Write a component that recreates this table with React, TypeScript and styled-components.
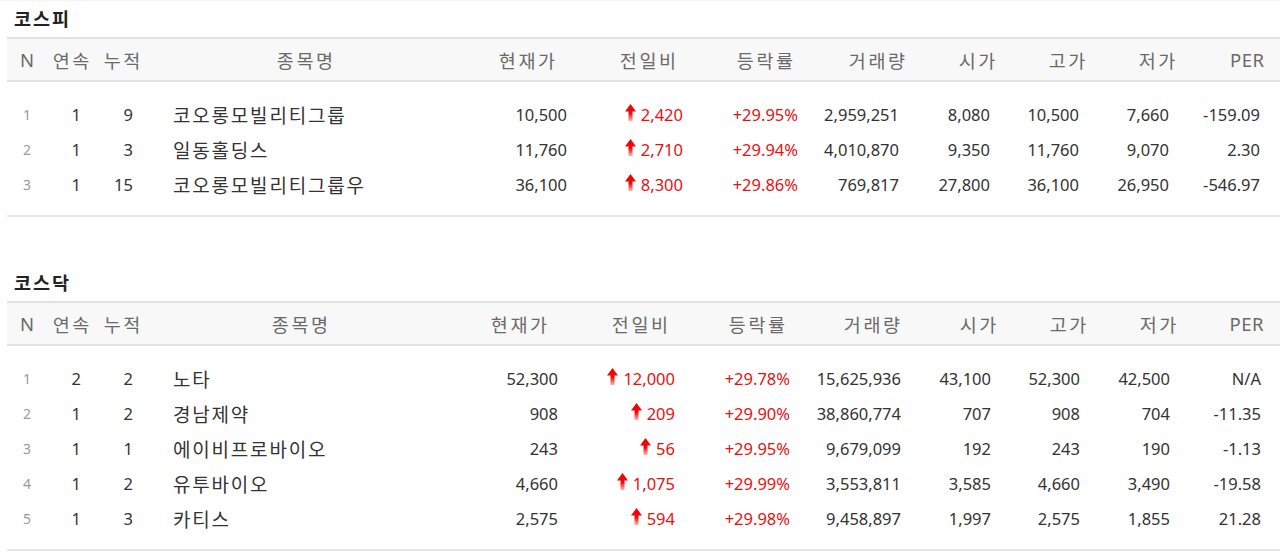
import React from "react";
import styled, { createGlobalStyle } from "styled-components";

const Global = createGlobalStyle`
  html, body { margin: 0; padding: 0; background: #fff; }
  body {
    font-family: "Noto Sans", "Noto Sans CJK KR", sans-serif;
    color: #333;
    overflow: hidden;
  }
`;

type Col = { w: number; align: "center" | "left" | "right"; pad: number; hpl?: number };

type Stock = {
  streak: string;
  total: string;
  name: string;
  price: string;
  diff: string;
  rate: string;
  volume: string;
  open: string;
  high: string;
  low: string;
  per: string;
};

const Page = styled.div`
  padding: 0 0 0 7px;
  width: 1273px;
  border-top: 1px solid #f3f3f3;
`;

const Section = styled.section<{ $gap: number }>`
  margin-top: ${(p) => p.$gap}px;
`;

const Title = styled.h2`
  margin: 0;
  height: 36px;
  line-height: 36px;
  padding-left: 7px;
  font-size: 18.5px;
  font-weight: 700;
  letter-spacing: 2px;
  color: #222;
`;

const Grid = styled.div<{ $cols: string }>`
  display: grid;
  grid-template-columns: ${(p) => p.$cols};
  align-items: center;
`;

const HeaderRow = styled(Grid)`
  height: 41px;
  background: #f8f8f8;
  border-top: 2px solid #e2e2e2;
  border-bottom: 2px solid #e2e2e2;
`;

const HeaderCell = styled.div<{ $pl: number; $ls: number }>`
  text-align: center;
  padding-left: ${(p) => p.$pl + p.$ls}px;
  font-size: 18.5px;
  letter-spacing: ${(p) => p.$ls}px;
  color: #6a6a6a;
  white-space: nowrap;
`;

const Body = styled.div`
  padding: 15px 0 13px;
  border-bottom: 2px solid #e6e6e6;
`;

const Row = styled(Grid)`
  height: 35px;
`;

const Cell = styled.div<{ $align: string; $pad: number }>`
  display: flex;
  align-items: center;
  justify-content: ${(p) =>
    p.$align === "right" ? "flex-end" : p.$align === "left" ? "flex-start" : "center"};
  padding-right: ${(p) => (p.$align === "right" ? p.$pad : 0)}px;
  padding-left: ${(p) => (p.$align === "left" ? p.$pad : 0)}px;
  font-size: 16.5px;
  color: #333;
  white-space: nowrap;
`;

const IndexText = styled.span`
  font-size: 14px;
  color: #9a9a9a;
`;

const NameText = styled.span`
  font-size: 19px;
  letter-spacing: 1.8px;
  color: #333;
`;

const UpText = styled.span`
  color: #e8110f;
`;

const ArrowIcon = styled.svg`
  width: 11px;
  height: 17px;
  margin-right: 5px;
  margin-top: -4px;
  flex: none;
`;

const Arrow = ({ id }: { id: string }) => (
  <ArrowIcon viewBox="0 0 11 17" aria-hidden="true">
    <defs>
      <linearGradient id={id} x1="0" y1="0" x2="0" y2="1">
        <stop offset="0" stopColor="#f00000" />
        <stop offset="0.55" stopColor="#f20a0a" />
        <stop offset="1" stopColor="#ffb4b4" />
      </linearGradient>
    </defs>
    <path d="M5.5 0 L11 7.5 L7.5 7.5 L7.5 17 L3.5 17 L3.5 7.5 L0 7.5 Z" fill={`url(#${id})`} />
  </ArrowIcon>
);

const headers = ["N", "연속", "누적", "종목명", "현재가", "전일비", "등락률", "거래량", "시가", "고가", "저가", "PER"];

const kospiCols: Col[] = [
  { w: 40, align: "center", pad: 0 },
  { w: 48, align: "right", pad: 14 },
  { w: 54, align: "right", pad: 16 },
  { w: 312, align: "left", pad: 24 },
  { w: 132, align: "right", pad: 26 },
  { w: 110, align: "right", pad: 20 },
  { w: 124, align: "right", pad: 29 },
  { w: 100, align: "right", pad: 28 },
  { w: 100, align: "right", pad: 37 },
  { w: 80, align: "right", pad: 28 },
  { w: 100, align: "right", pad: 38 },
  { w: 73, align: "right", pad: 20, hpl: 7 },
];

const kosdaqCols: Col[] = [
  { w: 40, align: "center", pad: 0 },
  { w: 48, align: "right", pad: 14 },
  { w: 54, align: "right", pad: 16 },
  { w: 302, align: "left", pad: 24 },
  { w: 136, align: "right", pad: 29 },
  { w: 106, align: "right", pad: 18 },
  { w: 128, align: "right", pad: 31 },
  { w: 102, align: "right", pad: 22 },
  { w: 110, align: "right", pad: 42 },
  { w: 70, align: "right", pad: 23 },
  { w: 110, align: "right", pad: 43 },
  { w: 67, align: "right", pad: 19 },
];

const kospi: Stock[] = [
  { streak: "1", total: "9", name: "코오롱모빌리티그룹", price: "10,500", diff: "2,420", rate: "+29.95%", volume: "2,959,251", open: "8,080", high: "10,500", low: "7,660", per: "-159.09" },
  { streak: "1", total: "3", name: "일동홀딩스", price: "11,760", diff: "2,710", rate: "+29.94%", volume: "4,010,870", open: "9,350", high: "11,760", low: "9,070", per: "2.30" },
  { streak: "1", total: "15", name: "코오롱모빌리티그룹우", price: "36,100", diff: "8,300", rate: "+29.86%", volume: "769,817", open: "27,800", high: "36,100", low: "26,950", per: "-546.97" },
];

const kosdaq: Stock[] = [
  { streak: "2", total: "2", name: "노타", price: "52,300", diff: "12,000", rate: "+29.78%", volume: "15,625,936", open: "43,100", high: "52,300", low: "42,500", per: "N/A" },
  { streak: "1", total: "2", name: "경남제약", price: "908", diff: "209", rate: "+29.90%", volume: "38,860,774", open: "707", high: "908", low: "704", per: "-11.35" },
  { streak: "1", total: "1", name: "에이비프로바이오", price: "243", diff: "56", rate: "+29.95%", volume: "9,679,099", open: "192", high: "243", low: "190", per: "-1.13" },
  { streak: "1", total: "2", name: "유투바이오", price: "4,660", diff: "1,075", rate: "+29.99%", volume: "3,553,811", open: "3,585", high: "4,660", low: "3,490", per: "-19.58" },
  { streak: "1", total: "3", name: "카티스", price: "2,575", diff: "594", rate: "+29.98%", volume: "9,458,897", open: "1,997", high: "2,575", low: "1,855", per: "21.28" },
];

const isLatin = (s: string) => /^[A-Za-z]+$/.test(s);

const UpperTable = ({ id, title, cols, rows, gap }: { id: string; title: string; cols: Col[]; rows: Stock[]; gap: number }) => {
  const template = cols.map((c) => `${c.w}px`).join(" ");
  return (
    <Section $gap={gap}>
      <Title>{title}</Title>
      <HeaderRow $cols={template}>
        {headers.map((h, i) => (
          <HeaderCell key={h} $pl={cols[i].hpl ?? 0} $ls={isLatin(h) ? 0.5 : 2.6}>
            {h}
          </HeaderCell>
        ))}
      </HeaderRow>
      <Body>
        {rows.map((r, idx) => {
          const values: React.ReactNode[] = [
            <IndexText>{idx + 1}</IndexText>,
            r.streak,
            r.total,
            <NameText>{r.name}</NameText>,
            r.price,
            <>
              <Arrow id={`${id}-up-${idx}`} />
              <UpText>{r.diff}</UpText>
            </>,
            <UpText>{r.rate}</UpText>,
            r.volume,
            r.open,
            r.high,
            r.low,
            r.per,
          ];
          return (
            <Row key={r.name} $cols={template}>
              {values.map((v, i) => (
                <Cell key={i} $align={cols[i].align} $pad={cols[i].pad}>
                  {v}
                </Cell>
              ))}
            </Row>
          );
        })}
      </Body>
    </Section>
  );
};

export default function App() {
  return (
    <>
      <Global />
      <Page>
        <UpperTable id="kospi" title="코스피" cols={kospiCols} rows={kospi} gap={0} />
        <UpperTable id="kosdaq" title="코스닥" cols={kosdaqCols} rows={kosdaq} gap={48} />
      </Page>
    </>
  );
}
